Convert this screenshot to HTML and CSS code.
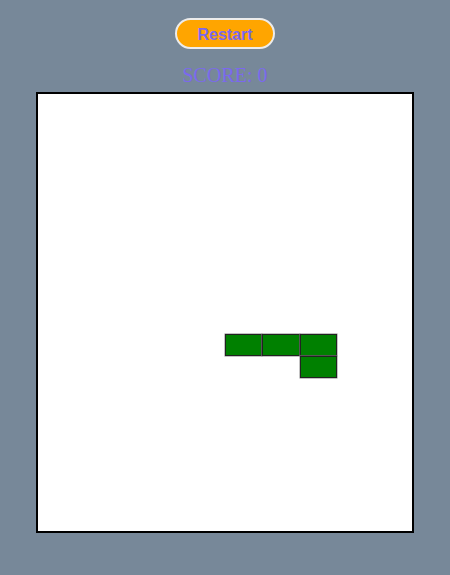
FILE: index.html
```html
<!DOCTYPE html>
<html>
<head>
<meta charset="utf-8">
<link rel="stylesheet" href="styles.css">
</head>
<body>
<div class="app">
  <button class="restart">Restart</button>
  <div class="score">SCORE: 0</div>
  <div class="board">
    <div class="cell c6 r12"></div>
    <div class="cell c7 r12"></div>
    <div class="cell c8 r12"></div>
    <div class="cell c8 r13"></div>
  </div>
</div>
</body>
</html>
```

FILE: styles.css
```css
html, body {
  margin: 0;
  padding: 0;
  background: #778899;
}
.app {
  display: flex;
  flex-direction: column;
  align-items: center;
  padding-top: 18px;
}
.restart {
  box-sizing: border-box;
  width: 100px;
  height: 31px;
  padding: 3px 0 0 0;
  background: #ffa500;
  border: 2px solid #ececec;
  border-radius: 16px;
  color: #7b68ee;
  font-family: "Liberation Sans", Arial, sans-serif;
  font-weight: bold;
  font-size: 16px;
  line-height: 18px;
}
.score {
  margin-top: 15px;
  font-family: "Liberation Serif", "Times New Roman", serif;
  font-size: 20px;
  line-height: 23px;
  color: #7b68ee;
}
.board {
  margin-top: 5px;
  width: 374px;
  height: 437px;
  background: #fff;
  border: 2px solid #000;
  display: grid;
  grid-template-columns: repeat(10, 1fr);
  grid-template-rows: repeat(20, 1fr);
}
.cell {
  background: #008000;
  border: 1px solid #222;
  box-shadow: 0 0 0 0.5px #888;
}
.c6 { grid-column: 6; }
.c7 { grid-column: 7; }
.c8 { grid-column: 8; }
.r12 { grid-row: 12; }
.r13 { grid-row: 13; }
```
